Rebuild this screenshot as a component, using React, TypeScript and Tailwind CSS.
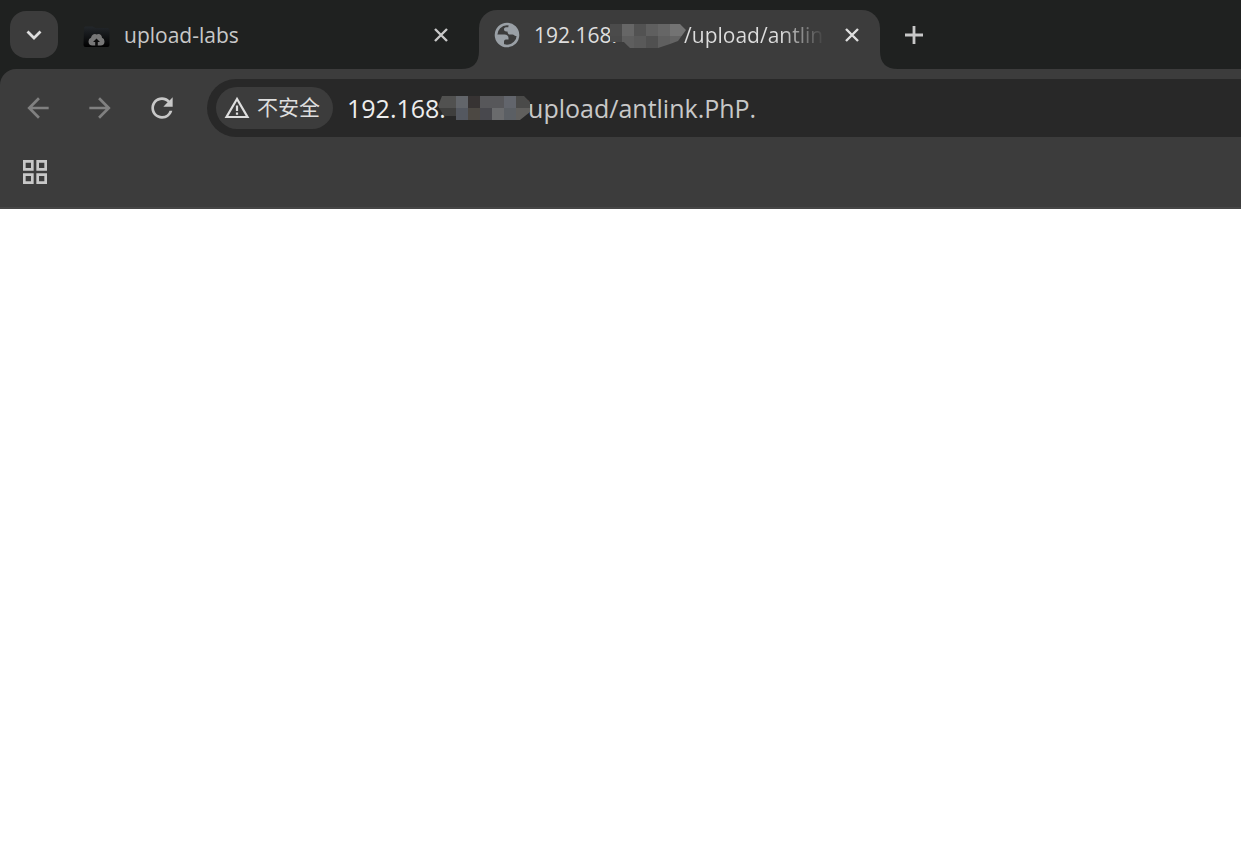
import { MdArrowBack, MdRefresh, MdOutlineGridView } from "react-icons/md";

const tabPixels = ["#4b4b4b", "#666666", "#525252", "#5f5f5f", "#666666", "#737373", "#494949", "#5e5e5e", "#595959", "#505050", "#5f5f5f", "#646464"];
const urlPixels = ["#515150", "#62656a", "#373333", "#57575a", "#57575a", "#62656c", "#4a4a49", "#3f3f3e", "#545860", "#4c4843", "#48484d", "#6a6b6d", "#5b5f64", "#605f5d"];

function Mosaic({ colors, columns, shape, width, className }: { colors: string[]; columns: number; shape: string; width: number; className: string }) {
  const id = `mosaic-${columns}`;
  return (
    <svg className={className} viewBox={`0 0 ${width} 24`} width={width} height="24" aria-hidden="true" shapeRendering="crispEdges">
      <clipPath id={id}><path d={shape} /></clipPath>
      <g clipPath={`url(#${id})`}>
        {colors.map((fill, i) => {
          const column = i % columns;
          const first = column === 0;
          const last = column === columns - 1;
          return (
            <rect key={i} x={first ? 0 : column * 12 + (columns === 7 ? 6 : 0)} y={Math.floor(i / columns) * 12} width={first || last ? 18 : 12} height="12" fill={fill} />
          );
        })}
      </g>
    </svg>
  );
}

function CloseIcon() {
  return (
    <svg viewBox="0 0 20 20" className="size-5" fill="none" stroke="currentColor" strokeWidth="2.4" aria-hidden="true">
      <path d="M4 4l12 12M16 4L4 16" />
    </svg>
  );
}

function GlobeIcon() {
  return (
    <svg viewBox="0 0 26 26" className="size-[26px] shrink-0 text-[#9aa0a6]" fill="none" aria-hidden="true">
      <circle cx="13" cy="13" r="11" stroke="currentColor" strokeWidth="2.6" />
      <path d="M16 2.500c-1.500.6-1.700 1.600-1.700 2.700H12c-1.500 0-2 1-2 2.200 0 1.300 1 2 2.300 2h1.200c0 2.200 1.200 3.200 3 3.200h2c1.500 0 2 1.500 3.200 1.500H24C24.500 7 21 3 16 2.500z" fill="currentColor" />
      <path d="M2 12.500h8.500c2.500 0 4 1.500 4 3.500v1.500h-2.500c-1.500 0-2 1-2 2.500v3.500C5 22.500 2 18 2 12.500z" fill="currentColor" />
    </svg>
  );
}

export default function App() {
  return (
    <div className="flex min-h-screen flex-col bg-white font-['Open_Sans','Noto_Sans_CJK_SC',sans-serif]">
      <header className="bg-[#1f2120] text-[#dedede]">
        <div className="flex h-[69px] pl-[10px] pt-[10px]">
          <button type="button" aria-label="Search tabs" className="mt-px flex h-[47px] w-12 shrink-0 items-center justify-center rounded-2xl bg-[#3c3c3c]">
            <svg viewBox="0 0 16 10" className="h-[10px] w-4" fill="none" stroke="currentColor" strokeWidth="2.8" aria-hidden="true"><path d="M1.500 1.500L8 8l6.500-6.500" /></svg>
          </button>
          <div className="ml-[25px] flex h-[50px] w-[378px] shrink-0 items-center pr-[10px] text-[#c8c8c8]">
            <svg viewBox="0 0 27 22" className="mt-[3px] h-[22px] w-[27px]" aria-hidden="true">
              <defs><linearGradient id="folder" x2="0" y2="1"><stop stopColor="#23272b" /><stop offset="1" stopColor="#000" /></linearGradient></defs>
              <path d="M1 2q0-1.500 1.500-1.500h7l3 1.500h12q2 0 2 2v15q0 2-2 2h-22q-2 0-2-2z" fill="url(#folder)" />
              <path d="M9.500 19.500q-4 0-4-4 0-3 2.500-3.800 1-3.700 4-3.700 1 0 1.700.5.700-.5 1.800-.5 3 0 3.500 3.700 2.500.8 2.500 3.800 0 4-4 4z" fill="#777" />
              <path d="M13.500 12.500l3.500 3.500h-2.200v4.500h-2.600v-4.500H10z" fill="#0b0b0b" />
            </svg>
            <span className="ml-[14px] text-[21px] leading-7">upload-labs</span>
            <button type="button" aria-label="Close upload-labs" className="ml-auto"><CloseIcon /></button>
          </div>
          <svg viewBox="0 0 18 18" className="size-[18px] shrink-0 self-end" aria-hidden="true"><path d="M18 0v18H0Q18 18 18 0z" fill="#3c3c3c" /></svg>
          <div className="w-[401px] shrink-0 rounded-t-[18px] bg-[#3c3c3c] pl-[15px] pr-[18px]">
            <div className="flex h-[50px] items-center">
              <GlobeIcon />
              <div className="ml-[14px] flex items-center whitespace-nowrap text-[21px] leading-7">
                <span>192.168.</span>
                <Mosaic colors={tabPixels} columns={6} width={76} shape="M0 0H70L76 6 68 17 60 20 48 24H20L14 18H0z" className="-ml-[7px] mt-0.5 shrink-0" />
                <span className="-ml-0.5 bg-linear-to-r from-[#dedede] from-70% to-[#444444] bg-clip-text text-transparent">/upload/antlin</span>
              </div>
              <button type="button" aria-label="Close current tab" className="ml-auto"><CloseIcon /></button>
            </div>
          </div>
          <svg viewBox="0 0 18 18" className="size-[18px] shrink-0 self-end" aria-hidden="true"><path d="M0 0v18h18Q0 18 0 0z" fill="#3c3c3c" /></svg>
          <button type="button" aria-label="New tab" className="flex h-[50px] w-8 items-center justify-center text-[#c8c8c8]">
            <svg viewBox="0 0 20 20" className="size-5" stroke="currentColor" strokeWidth="2.8" aria-hidden="true"><path d="M10 1v18M1 10h18" /></svg>
          </button>
        </div>
        <div className="rounded-tl-2xl border-b-2 border-[#464646] bg-[#3c3c3c] pt-[10px]">
          <div className="flex items-center">
            <nav aria-label="Navigation" className="flex w-[207px] shrink-0 items-center gap-[30px] pl-[22px]">
              <button type="button" aria-label="Back" className="text-[#808080]"><MdArrowBack className="size-8" /></button>
              <button type="button" aria-label="Forward" className="text-[#808080]"><MdArrowBack className="size-8 rotate-180" /></button>
              <button type="button" aria-label="Reload" className="text-[#c8c8c8]">
                <MdRefresh className="size-8" />
              </button>
            </nav>
            <div className="flex h-[58px] min-w-0 flex-1 items-center rounded-l-full bg-[#282828] pl-[9px]">
              <button type="button" className="flex h-[42px] w-[117px] shrink-0 items-center gap-[7px] rounded-full bg-[#3c3c3c] pl-2 text-[21px]">
                <svg viewBox="0 0 26 24" className="h-6 w-[26px]" fill="none" stroke="currentColor" strokeWidth="2.200" aria-hidden="true"><path d="M13 3L2.500 21h21zM13 9.500v5.500M13 16.500v2.200" /></svg>
                <span>不安全</span>
              </button>
              <div className="ml-[14px] flex min-w-0 flex-1 items-center text-[25px] leading-8">
                <label htmlFor="address" className="text-[#ededed]">192.168.</label>
                <Mosaic colors={urlPixels} columns={7} width={92} shape="M4 0H86L92 6V16L82 24H18V20H6L0 10z" className="relative z-10 -ml-2 shrink-0" />
                <input id="address" defaultValue="/upload/antlink.PhP." spellCheck={false} className="-ml-[11px] min-w-0 flex-1 bg-transparent text-[#c8c8c8] outline-none" />
              </div>
            </div>
          </div>
          <div className="flex h-[70px] items-center pl-[19px]">
            <button type="button" aria-label="Apps" className="text-[#c8c8c8]">
              <MdOutlineGridView className="size-8" />
            </button>
          </div>
        </div>
      </header>
      <main className="flex-1 bg-white" />
    </div>
  );
}
